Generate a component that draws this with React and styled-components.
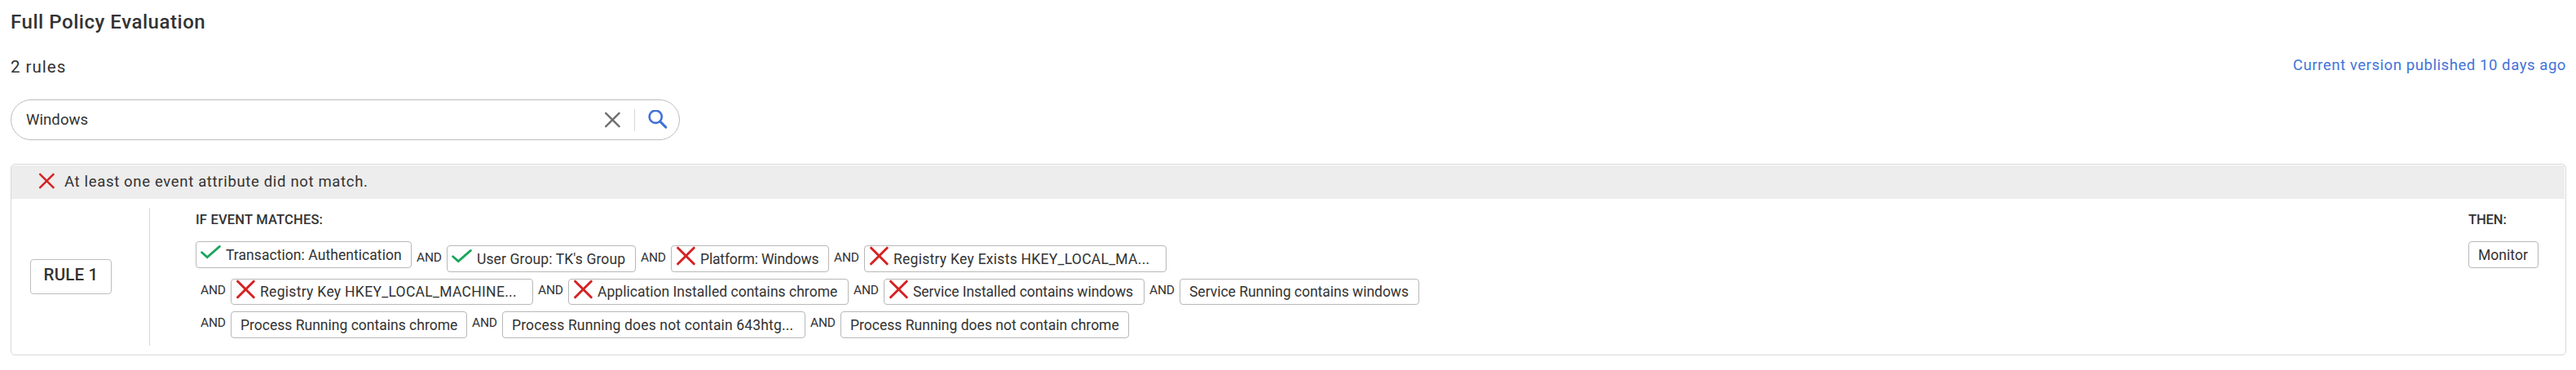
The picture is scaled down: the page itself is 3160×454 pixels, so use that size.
import React from 'react';
import styled, { createGlobalStyle } from 'styled-components';

const GlobalStyle = createGlobalStyle`
  *, *::before, *::after { box-sizing: border-box; }
  body {
    margin: 0;
    background: #fff;
    color: #333;
    font-family: Roboto, "Liberation Sans", sans-serif;
  }
`;

const Page = styled.main`
  display: flex;
  flex-direction: column;
  padding: 0 12px 0 13px;
`;

const Title = styled.h1`
  margin: 0;
  font-size: 24px;
  font-weight: 500;
  line-height: 54px;
  letter-spacing: 0.55px;
`;

const Summary = styled.div`
  display: flex;
  justify-content: space-between;
  align-items: flex-start;
  height: 68px;
`;

const RuleCount = styled.span`
  font-size: 20.5px;
  line-height: 56px;
  letter-spacing: 1px;
`;

const VersionLink = styled.a`
  color: #4473d9;
  font-size: 18.5px;
  line-height: 52px;
  letter-spacing: 0.577px;
`;

const SearchBox = styled.div`
  display: flex;
  align-items: center;
  width: 821px;
  height: 50px;
  padding: 0 14px 0 18px;
  border: 1px solid #bdbdbd;
  border-radius: 25px;
`;

const SearchText = styled.span`
  flex: 1;
  font-size: 18.5px;
  letter-spacing: 0.08px;
`;

const SearchDivider = styled.span`
  width: 1px;
  height: 27px;
  margin: 0 16px 0 17px;
  background: #d8d8d8;
`;

const Card = styled.section`
  display: flex;
  flex-direction: column;
  height: 235px;
  margin-top: 29px;
  border: 1px solid #d8d8d8;
  border-radius: 5px;
`;

const CardHeader = styled.header`
  display: flex;
  align-items: center;
  gap: 12px;
  height: 41px;
  margin: 1px 1px 0 0;
  padding: 0 0 3px 33px;
  background: #ededed;
  font-size: 18.5px;
  letter-spacing: 0.666px;
`;

const HeaderText = styled.span`
  padding-top: 1px;
`;

const CardBody = styled.div`
  display: flex;
  flex: 1;
  padding: 11px 0;
`;

const RuleCell = styled.div`
  width: 170px;
  height: 169px;
  padding: 63px 0 0 23px;
  border-right: 1px solid #d8d8d8;
`;

const RuleName = styled.div`
  width: 100px;
  height: 43px;
  padding-bottom: 5px;
  border: 1px solid #bdbdbd;
  border-radius: 4px;
  font-size: 20.5px;
  font-weight: 500;
  line-height: 36px;
  letter-spacing: 0.18px;
  text-align: center;
`;

const Conditions = styled.div`
  flex: 1;
  padding-left: 56px;
`;

const Outcome = styled.div`
  width: 119px;
`;

const Label = styled.h2`
  margin: 0 0 11px;
  font-size: 16.5px;
  font-weight: 500;
  line-height: 30px;
  letter-spacing: ${(p) => p.$tracking}px;
`;

const ConditionRow = styled.div`
  display: flex;
  align-items: flex-start;
  height: ${(p) => p.$height}px;
  margin-bottom: 8px;
`;

const And = styled.span`
  width: 43px;
  padding-left: 6px;
  font-size: 15.5px;
  line-height: ${(p) => p.$line}px;
  letter-spacing: -0.2px;
`;

const Chip = styled.div`
  display: flex;
  align-items: center;
  width: ${(p) => p.$width}px;
  height: ${(p) => p.$height || 33}px;
  margin-top: ${(p) => p.$drop || 0}px;
  padding-left: ${(p) => (p.$icon ? 5 : 11)}px;
  border: 1px solid #b8b8b8;
  border-radius: 4px;
  font-size: 17.5px;
  letter-spacing: ${(p) => p.$tracking}px;
  white-space: nowrap;

  svg {
    flex: none;
    align-self: flex-start;
    margin-right: 6px;
  }
`;

const Cross = ({ size = 24, color = '#d62222', stroke = 3 }) => (
  <svg width={size} height={size} viewBox="0 0 24 24" fill="none" stroke={color} strokeWidth={stroke} strokeLinecap="round">
    <path d="M2.6 2.2 22.2 21.8M22.2 2.2 2.6 21.8" />
  </svg>
);

const Check = () => (
  <svg width="25" height="24" viewBox="0 0 25 24" fill="none" stroke="#1aa65c" strokeWidth="2.8" strokeLinecap="round">
    <path d="M1.6 12.7 8.2 18.6 23.4 5.4" />
  </svg>
);

const Magnifier = () => (
  <svg width="24" height="24" viewBox="0 0 24 24" fill="none" stroke="#4171d6" strokeWidth="2.6" strokeLinecap="round">
    <circle cx="9.2" cy="8.3" r="7.6" />
    <path d="m14.8 14.1 7 7" strokeWidth="3" />
  </svg>
);

const rows = [
  {
    height: 38,
    andLine: 40,
    chips: [
      { text: 'Transaction: Authentication', icon: 'check', width: 265, tracking: 0.062 },
      { text: "User Group: TK's Group", icon: 'check', width: 232, tracking: 0.113, drop: 5 },
      { text: 'Platform: Windows', icon: 'cross', width: 194, tracking: -0.15, drop: 5 },
      { text: 'Registry Key Exists HKEY_LOCAL_MA...', icon: 'cross', width: 371, tracking: 0.269, drop: 5 },
    ],
  },
  {
    height: 32,
    andLine: 28,
    leadingAnd: true,
    chips: [
      { text: 'Registry Key HKEY_LOCAL_MACHINE...', icon: 'cross', width: 371, height: 32, tracking: 0.301 },
      { text: 'Application Installed contains chrome', icon: 'cross', width: 344, height: 32, tracking: 0.024 },
      { text: 'Service Installed contains windows', icon: 'cross', width: 320, height: 32, tracking: -0.072 },
      { text: 'Service Running contains windows', width: 294, height: 32, tracking: -0.017 },
    ],
  },
  {
    height: 33,
    andLine: 29,
    leadingAnd: true,
    chips: [
      { text: 'Process Running contains chrome', width: 290, tracking: 0.01 },
      { text: 'Process Running does not contain 643htg...', width: 372, tracking: 0.161 },
      { text: 'Process Running does not contain chrome', width: 354, tracking: 0.016 },
    ],
  },
];

export default function App() {
  return (
    <Page>
      <GlobalStyle />
      <Title>Full Policy Evaluation</Title>
      <Summary>
        <RuleCount>2 rules</RuleCount>
        <VersionLink>Current version published 10 days ago</VersionLink>
      </Summary>
      <SearchBox>
        <SearchText>Windows</SearchText>
        <Cross size={20} color="#6e6e6e" stroke={2.8} />
        <SearchDivider />
        <Magnifier />
      </SearchBox>
      <Card>
        <CardHeader>
          <Cross size={20} />
          <HeaderText>At least one event attribute did not match.</HeaderText>
        </CardHeader>
        <CardBody>
          <RuleCell>
            <RuleName>RULE 1</RuleName>
          </RuleCell>
          <Conditions>
            <Label $tracking={0.193}>IF EVENT MATCHES:</Label>
            {rows.map((row) => (
              <ConditionRow key={row.chips[0].text} $height={row.height}>
                {row.chips.map((chip, i) => (
                  <React.Fragment key={chip.text}>
                    {(i > 0 || row.leadingAnd) && <And $line={row.andLine}>AND</And>}
                    <Chip
                      $width={chip.width}
                      $height={chip.height}
                      $drop={chip.drop}
                      $icon={Boolean(chip.icon)}
                      $tracking={chip.tracking}
                    >
                      {chip.icon === 'check' && <Check />}
                      {chip.icon === 'cross' && <Cross />}
                      <span>{chip.text}</span>
                    </Chip>
                  </React.Fragment>
                ))}
              </ConditionRow>
            ))}
          </Conditions>
          <Outcome>
            <Label $tracking={-0.07}>THEN:</Label>
            <Chip $width={86} $tracking={0.048}>
              <span>Monitor</span>
            </Chip>
          </Outcome>
        </CardBody>
      </Card>
    </Page>
  );
}
